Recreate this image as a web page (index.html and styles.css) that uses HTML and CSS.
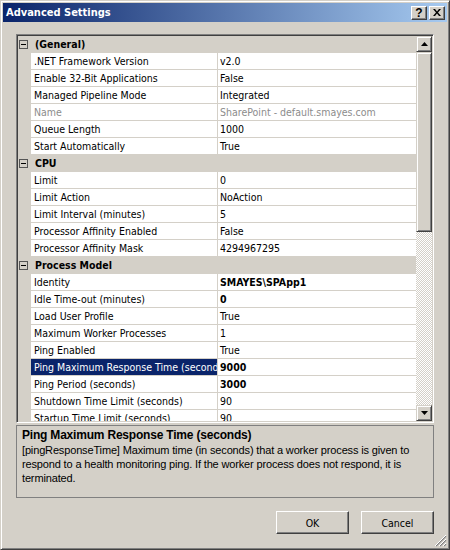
FILE: index.html
```html
<!DOCTYPE html>
<html>
<head>
<meta charset="utf-8">
<title>Advanced Settings</title>
<link rel="stylesheet" href="styles.css">
</head>
<body>
<div class="window">
  <div class="titlebar">
    <span class="title">Advanced Settings</span>
    <div class="caption-btns">
      <div class="cap-btn help">?</div>
      <div class="cap-btn close">
        <svg width="8" height="7" viewBox="0 0 8 7"><path d="M0 0h2l2 2.5L6 0h2L5 3.5 8 7H6L4 4.5 2 7H0l3-3.5z" fill="#000"/></svg>
      </div>
    </div>
  </div>
  <div class="content">
    <div class="grid">
      <div class="rows">
        <div class="cat"><span class="toggle"></span><span class="cat-label">(General)</span></div>
        <div class="row"><span class="gutter"></span><span class="name">.NET Framework Version</span><span class="value">v2.0</span></div>
        <div class="row"><span class="gutter"></span><span class="name">Enable 32-Bit Applications</span><span class="value">False</span></div>
        <div class="row"><span class="gutter"></span><span class="name">Managed Pipeline Mode</span><span class="value">Integrated</span></div>
        <div class="row readonly"><span class="gutter"></span><span class="name">Name</span><span class="value">SharePoint - default.smayes.com</span></div>
        <div class="row"><span class="gutter"></span><span class="name">Queue Length</span><span class="value">1000</span></div>
        <div class="row"><span class="gutter"></span><span class="name">Start Automatically</span><span class="value">True</span></div>
        <div class="cat"><span class="toggle"></span><span class="cat-label">CPU</span></div>
        <div class="row"><span class="gutter"></span><span class="name">Limit</span><span class="value">0</span></div>
        <div class="row"><span class="gutter"></span><span class="name">Limit Action</span><span class="value">NoAction</span></div>
        <div class="row"><span class="gutter"></span><span class="name">Limit Interval (minutes)</span><span class="value">5</span></div>
        <div class="row"><span class="gutter"></span><span class="name">Processor Affinity Enabled</span><span class="value">False</span></div>
        <div class="row"><span class="gutter"></span><span class="name">Processor Affinity Mask</span><span class="value">4294967295</span></div>
        <div class="cat"><span class="toggle"></span><span class="cat-label">Process Model</span></div>
        <div class="row"><span class="gutter"></span><span class="name">Identity</span><span class="value bold">SMAYES\SPApp1</span></div>
        <div class="row"><span class="gutter"></span><span class="name">Idle Time-out (minutes)</span><span class="value bold">0</span></div>
        <div class="row"><span class="gutter"></span><span class="name">Load User Profile</span><span class="value">True</span></div>
        <div class="row"><span class="gutter"></span><span class="name">Maximum Worker Processes</span><span class="value">1</span></div>
        <div class="row"><span class="gutter"></span><span class="name">Ping Enabled</span><span class="value">True</span></div>
        <div class="row selected"><span class="gutter"></span><span class="name">Ping Maximum Response Time (seconds)</span><span class="value bold">9000</span></div>
        <div class="row"><span class="gutter"></span><span class="name">Ping Period (seconds)</span><span class="value bold">3000</span></div>
        <div class="row"><span class="gutter"></span><span class="name">Shutdown Time Limit (seconds)</span><span class="value">90</span></div>
        <div class="row"><span class="gutter"></span><span class="name">Startup Time Limit (seconds)</span><span class="value">90</span></div>
      </div>
      <div class="scrollbar">
        <div class="sb-btn"><svg width="7" height="4" viewBox="0 0 7 4"><path d="M3.5 0L7 4H0z" fill="#000"/></svg></div>
        <div class="sb-thumb"></div>
        <div class="sb-track"></div>
        <div class="sb-btn"><svg width="7" height="4" viewBox="0 0 7 4"><path d="M0 0h7L3.5 4z" fill="#000"/></svg></div>
      </div>
    </div>
    <div class="desc">
      <div class="desc-title">Ping Maximum Response Time (seconds)</div>
      <div class="desc-text">[pingResponseTime] Maximum time (in seconds) that a worker process is given to<br>respond to a health monitoring ping. If the worker process does not respond, it is<br>terminated.</div>
    </div>
    <div class="buttons">
      <button class="btn">OK</button>
      <button class="btn">Cancel</button>
    </div>
  </div>
  <svg class="grip" width="12" height="12" viewBox="0 0 12 12">
    <path d="M11 1L1 11M11 5L5 11M11 9L9 11" stroke="#808080" stroke-width="1.2"/>
    <path d="M11 0L0 11M11 4L4 11M11 8L8 11" stroke="#fff" stroke-width="1"/>
  </svg>
</div>
</body>
</html>
```
FILE: styles.css
```css
* { box-sizing: border-box; }
html, body { margin: 0; padding: 0; }
body {
  width: 450px;
  height: 550px;
  background: #D4D0C8;
  font-family: "DejaVu Sans Condensed", "DejaVu Sans", sans-serif;
  font-stretch: condensed;
  font-size: 10.5px;
  color: #000;
}
.window {
  position: relative;
  width: 450px;
  height: 550px;
  background: #D4D0C8;
  border: 1px solid;
  border-color: #D4D0C8 #404040 #404040 #D4D0C8;
  box-shadow: inset 1px 1px #fff, inset -1px -1px #808080;
  padding: 2px;
  display: flex;
  flex-direction: column;
}
.titlebar {
  height: 19px;
  background: linear-gradient(to right, #0A246A, #A6CAF0);
  display: flex;
  align-items: center;
  padding: 0 2px 0 3px;
}
.title {
  color: #fff;
  font-weight: bold;
  font-size: 11px;
}
.caption-btns {
  margin-left: auto;
  display: flex;
  gap: 2px;
}
.cap-btn {
  width: 16px;
  height: 14px;
  background: #D4D0C8;
  border: 1px solid;
  border-color: #fff #404040 #404040 #fff;
  box-shadow: inset -1px -1px #808080;
  display: flex;
  align-items: center;
  justify-content: center;
  font-family: "Liberation Sans", sans-serif;
  font-weight: bold;
  font-size: 12px;
  line-height: 12px;
}
.content {
  flex: 1;
  padding: 12px 13px 0 13px;
  display: flex;
  flex-direction: column;
}
.grid {
  height: 389px;
  border: 1px solid;
  border-color: #808080 #fff #fff #808080;
  box-shadow: inset 1px 1px #404040, inset -1px -1px #D4D0C8;
  padding: 1px;
  display: flex;
}
.rows {
  flex: 1;
  overflow: hidden;
  background: #fff;
}
.row, .cat {
  height: 17px;
  border-bottom: 1px solid #D4D0C8;
  display: flex;
  line-height: 16px;
  white-space: nowrap;
}
.cat {
  background: #D4D0C8;
  align-items: center;
  font-weight: bold;
}
.toggle {
  width: 9px;
  height: 9px;
  margin: 0 3px 0 1px;
  border: 1px solid #555;
  position: relative;
}
.toggle::after {
  content: "";
  position: absolute;
  left: 1px;
  top: 3px;
  width: 5px;
  height: 1px;
  background: #000;
}
.cat-label { padding-left: 4px; }
.gutter {
  width: 13px;
  background: #D4D0C8;
  flex: none;
}
.name {
  width: 187px;
  flex: none;
  border-right: 1px solid #D4D0C8;
  padding-left: 3px;
  overflow: hidden;
}
.value {
  flex: 1;
  padding-left: 2px;
  overflow: hidden;
}
.bold { font-weight: bold; }
.readonly { color: #8c8c8c; }
.selected .name {
  background: #0A246A;
  color: #fff;
}
.scrollbar {
  width: 16px;
  display: flex;
  flex-direction: column;
}
.sb-btn, .sb-thumb {
  background: #D4D0C8;
  border: 1px solid;
  border-color: #D4D0C8 #404040 #404040 #D4D0C8;
  box-shadow: inset 1px 1px #fff, inset -1px -1px #808080;
}
.sb-btn {
  height: 16px;
  display: flex;
  align-items: center;
  justify-content: center;
}
.sb-thumb { height: 180px; }
.sb-track {
  flex: 1;
  background-color: #fff;
  background-image: conic-gradient(#D4D0C8 25%, #fff 0 50%, #D4D0C8 0 75%, #fff 0);
  background-size: 2px 2px;
}
.desc {
  margin-top: 2px;
  height: 73px;
  border: 1px solid #808080;
  padding: 2px 5px;
  font-family: "Liberation Sans", sans-serif;
  font-stretch: normal;
  font-size: 11px;
}
.desc-title {
  font-weight: bold;
  font-size: 12px;
  line-height: 15px;
  letter-spacing: -0.2px;
}
.desc-text {
  line-height: 14px;
  white-space: nowrap;
  letter-spacing: -0.15px;
}
.buttons {
  margin-top: 13px;
  display: flex;
  justify-content: flex-end;
  gap: 12px;
}
.btn {
  width: 73px;
  height: 23px;
  margin: 0;
  padding: 0;
  background: #D4D0C8;
  border: 1px solid;
  border-color: #fff #404040 #404040 #fff;
  box-shadow: inset -1px -1px #808080;
  font-family: "DejaVu Sans Condensed", "DejaVu Sans", sans-serif;
  font-stretch: condensed;
  font-size: 10.5px;
  color: #000;
}
.grip {
  position: absolute;
  right: 2px;
  bottom: 2px;
}
```
